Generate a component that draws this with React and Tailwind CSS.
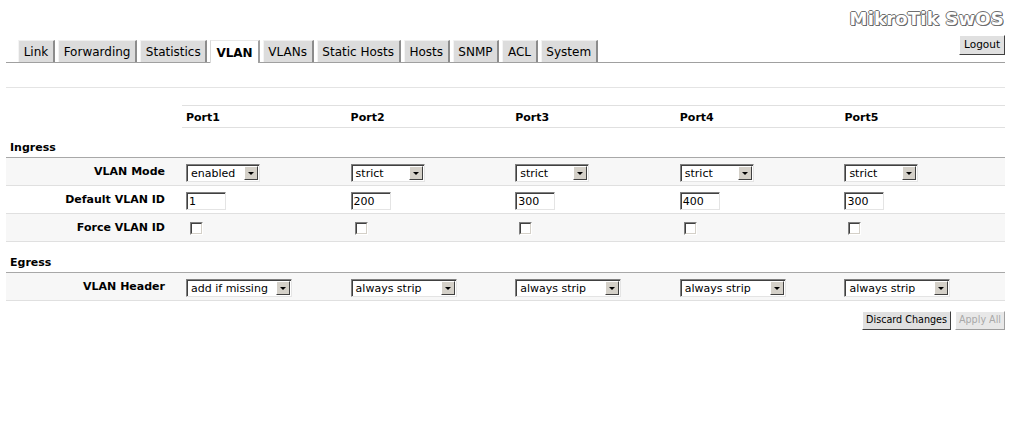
import React from "react";

const tabs = ["Link", "Forwarding", "Statistics", "VLAN", "VLANs", "Static Hosts", "Hosts", "SNMP", "ACL", "System"];
const ports = ["Port1", "Port2", "Port3", "Port4", "Port5"];

function Select({ value, wide }) {
  return (
    <div
      className={`flex h-[18px] ${wide ? "w-[106px]" : "w-[74px]"} items-center border border-t-[#808080] border-l-[#808080] border-b-[#e4e4e4] border-r-[#e4e4e4] bg-white`}
    >
      <div className="flex h-full flex-1 items-center border-t border-l border-t-[#404040] border-l-[#404040] pl-[3px] leading-none">
        {value}
        <div className="ml-auto mr-[1px] flex h-[14px] w-[14px] items-center justify-center border border-t-white border-l-white border-b-[#404040] border-r-[#404040] bg-[#d4d0c8]">
          <div className="h-0 w-0 border-x-[3px] border-t-[3px] border-x-transparent border-t-black" />
        </div>
      </div>
    </div>
  );
}

function TextInput({ value }) {
  return (
    <div className="flex h-[18px] w-[40px] border border-t-[#808080] border-l-[#808080] border-b-[#e4e4e4] border-r-[#e4e4e4] bg-white">
      <div className="flex flex-1 items-center border-t border-l border-t-[#404040] border-l-[#404040] pl-[1px] leading-none">
        {value}
      </div>
    </div>
  );
}

function Checkbox() {
  return (
    <div className="ml-[4px] h-[13px] w-[13px] border border-t-[#808080] border-l-[#808080] border-b-white border-r-white">
      <div className="h-full w-full border border-t-[#404040] border-l-[#404040] border-b-[#d4d0c8] border-r-[#d4d0c8] bg-white" />
    </div>
  );
}

function Row({ label, shaded, topLine, children }) {
  return (
    <div
      className={`grid grid-cols-[176px_repeat(5,1fr)] items-center border-b border-[#e0e0e0] pt-[2px] ${topLine ? "h-[29px] border-t border-t-[#a8a8a8]" : "h-[28px]"} ${shaded ? "bg-[#f7f7f7]" : "bg-white"}`}
    >
      <div className="pr-[17px] text-right font-bold">{label}</div>
      {children.map((c, i) => (
        <div key={i} className="pl-[4px]">
          {c}
        </div>
      ))}
    </div>
  );
}

function Button({ children, disabled }) {
  return (
    <div
      className={`flex h-[19px] items-center border border-t-white border-l-white px-[3px] text-[9.6px] ${disabled ? "border-b-[#a0a0a0] border-r-[#a0a0a0] bg-[#e8e8e8] text-[#a8a8a8]" : "border-b-[#404040] border-r-[#404040] bg-[#e0e0e0]"}`}
    >
      {children}
    </div>
  );
}

export default function App() {
  return (
    <div className="min-h-screen bg-white font-['DejaVu_Sans','Liberation_Sans',sans-serif] text-[11px] text-black">
      <div className="pl-[6px] pr-[7px]">
        <div className="flex h-[63px] items-end justify-between border-b border-[#a0a0a0]">
          <div className="flex gap-[3px] pl-[12px]">
            {tabs.map((t) =>
              t === "VLAN" ? (
                <div
                  key={t}
                  className="-mb-px flex h-[23px] items-center border-t border-l border-r-2 border-t-[#e8e8e8] border-l-[#d8d8d8] border-r-[#a0a0a0] bg-white px-[5px] pt-[2px] text-[12px] font-bold"
                >
                  {t}
                </div>
              ) : (
                <div
                  key={t}
                  className="flex h-[22px] items-center border-t border-l border-r-2 border-t-[#f0f0f0] border-l-[#f4f4f4] border-r-[#8c8c8c] bg-[#dcdcdc] px-[4.7px] text-[12px]"
                >
                  {t}
                </div>
              )
            )}
          </div>
          <div className="mb-[7px] flex flex-col items-end">
            <div className="mr-[1px] text-[18px] leading-[20px] font-bold tracking-[0.2px] text-white [text-shadow:1px_0_0_#707070,-1px_0_0_#707070,0_1px_0_#707070,0_-1px_0_#707070,1px_1px_0_#505050]">
              MikroTik SwOS
            </div>
            <div className="mt-[6px] flex h-[20px] items-center border border-t-white border-l-white border-b-[#404040] border-r-[#404040] bg-[#e0e0e0] px-[4px] text-[10.5px]">
              Logout
            </div>
          </div>
        </div>

        <div className="h-[25px] border-b border-[#e4e4e4]" />

        <div className="mt-[17px] grid grid-cols-[176px_repeat(5,1fr)]">
          <div />
          {ports.map((p) => (
            <div key={p} className="flex h-[23px] items-center border-y border-[#e0e0e0] pt-[3px] pl-[4px] font-bold">
              {p}
            </div>
          ))}
        </div>

        <div className="flex h-[29px] items-end pb-[1px] pl-[4px] font-bold">Ingress</div>
        <Row label="VLAN Mode" shaded topLine>
          {["enabled", "strict", "strict", "strict", "strict"].map((v, i) => (
            <Select key={i} value={v} />
          ))}
        </Row>
        <Row label="Default VLAN ID">
          {["1", "200", "300", "400", "300"].map((v, i) => (
            <TextInput key={i} value={v} />
          ))}
        </Row>
        <Row label="Force VLAN ID" shaded>
          {ports.map((p) => (
            <Checkbox key={p} />
          ))}
        </Row>

        <div className="flex h-[30px] items-end pb-[1px] pl-[4px] font-bold">Egress</div>
        <Row label="VLAN Header" shaded topLine>
          {["add if missing", "always strip", "always strip", "always strip", "always strip"].map((v, i) => (
            <Select key={i} value={v} wide />
          ))}
        </Row>

        <div className="mt-[10px] flex justify-end gap-[4px]">
          <Button>Discard Changes</Button>
          <Button disabled>Apply All</Button>
        </div>
      </div>
    </div>
  );
}
